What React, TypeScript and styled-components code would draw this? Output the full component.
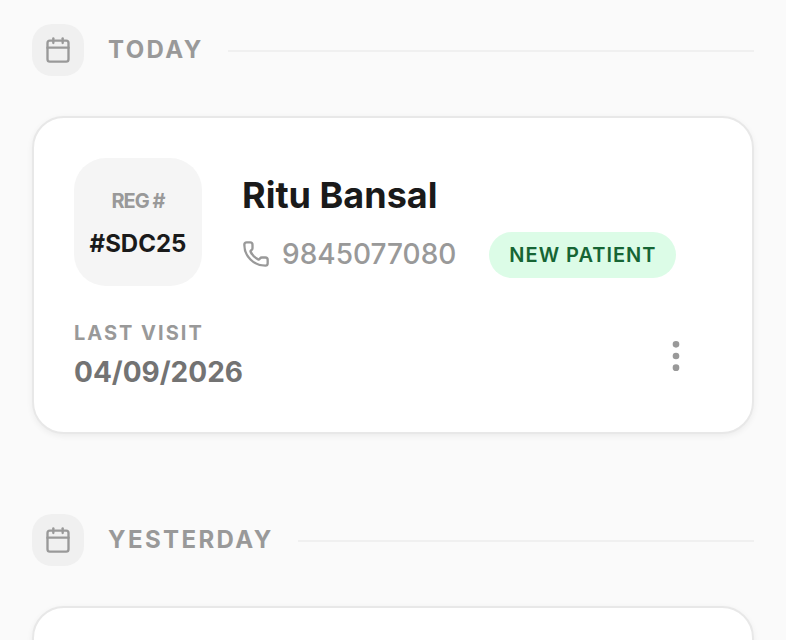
import React from "react";
import styled, { createGlobalStyle } from "styled-components";
import { Calendar, EllipsisVertical, Phone } from "lucide-react";

const GlobalStyle = createGlobalStyle`
  *, *::before, *::after { box-sizing: border-box; }
  html { background: #fafafa; }
  body { margin: 0; font-family: Inter, "Liberation Sans", sans-serif; color: #1a1a1a; }
  h2, h3, p, dl, dt, dd { margin: 0; }
  svg { display: block; flex: none; }
`;

const Page = styled.main`
  display: flex;
  flex-direction: column;
  gap: 80px;
  height: 100vh;
  padding: 24px 32px 0;
  overflow: hidden;
`;

const DaySection = styled.section`
  display: flex;
  flex: none;
  flex-direction: column;
  gap: 40px;
`;

const DayHeader = styled.header`
  display: flex;
  align-items: center;
  gap: 24px;
`;

const DayIcon = styled.span`
  display: flex;
  padding: 12px;
  border-radius: 20px;
  background: #f0f0f0;
  color: #999999;
`;

const DayTitle = styled.h2`
  font-size: 24px;
  line-height: 36px;
  font-weight: 700;
  letter-spacing: 0.1em;
  text-transform: uppercase;
  color: #999999;
`;

const Rule = styled.span`
  flex: 1;
  height: 4px;
  border-bottom: 2px solid #f0f0f0;
`;

const Card = styled.article`
  display: flex;
  flex-direction: column;
  gap: 34px;
  padding: 40px;
  border: 2px solid #e8e8e8;
  border-radius: 32px;
  background: #ffffff;
  box-shadow: 0 2px 6px rgba(0, 0, 0, 0.06);
`;

const Summary = styled.div`
  display: flex;
  align-items: center;
  gap: 40px;
`;

const RegBadge = styled.div`
  display: flex;
  flex: none;
  flex-direction: column;
  align-items: center;
  justify-content: center;
  gap: 12px;
  width: 128px;
  height: 128px;
  border-radius: 32px;
  background: #f5f5f5;
`;

const RegLabel = styled.span`
  font-size: 20px;
  line-height: 32px;
  font-weight: 700;
  letter-spacing: -0.05em;
  color: #999999;
`;

const RegNumber = styled.span`
  font-size: 24px;
  line-height: 30px;
  font-weight: 700;
`;

const Identity = styled.div`
  display: flex;
  flex-direction: column;
  gap: 8px;
`;

const PatientName = styled.h3`
  font-size: 36px;
  line-height: 58px;
  font-weight: 700;
`;

const Contact = styled.div`
  display: flex;
  align-items: flex-start;
  gap: 33px;
`;

const PhoneLink = styled.a`
  display: flex;
  align-items: center;
  gap: 12px;
  font-size: 28px;
  line-height: 44px;
  font-weight: 500;
  color: #999999;
  text-decoration: none;
`;

const StatusPill = styled.span`
  padding: 8px 20px;
  border-radius: 24px;
  background: #dcfce7;
  color: #166534;
  font-size: 20px;
  line-height: 30px;
  font-weight: 600;
  letter-spacing: 0.05em;
  text-transform: uppercase;
`;

const CardFooter = styled.div`
  display: flex;
  align-items: center;
  justify-content: space-between;
`;

const LastVisit = styled.dl`
  display: flex;
  flex-direction: column;
  gap: 6px;
`;

const VisitLabel = styled.dt`
  font-size: 20px;
  line-height: 26px;
  font-weight: 700;
  letter-spacing: 0.1em;
  text-transform: uppercase;
  color: #999999;
`;

const VisitDate = styled.dd`
  font-size: 28px;
  line-height: 40px;
  font-weight: 700;
  color: #737373;
`;

const MenuButton = styled.button`
  display: flex;
  padding: 16px;
  border: 0;
  border-radius: 16px;
  background: none;
  color: #999999;
  cursor: pointer;
`;

type Visit = { name: string; reg: string; phone: string; status: string; lastVisit: string };
type Day = { title: string; visits: Visit[] };

const days: Day[] = [
  {
    title: "Today",
    visits: [
      {
        name: "Ritu Bansal",
        reg: "#SDC25",
        phone: "9845077080",
        status: "New Patient",
        lastVisit: "04/09/2026",
      },
    ],
  },
  { title: "Yesterday", visits: [] },
];

function VisitCard({ visit }: { visit: Visit }) {
  return (
    <Card>
      <Summary>
        <RegBadge>
          <RegLabel>REG #</RegLabel>
          <RegNumber>{visit.reg}</RegNumber>
        </RegBadge>
        <Identity>
          <PatientName>{visit.name}</PatientName>
          <Contact>
            <PhoneLink href={`tel:${visit.phone}`}>
              <Phone size={28} strokeWidth={2} aria-hidden />
              {visit.phone}
            </PhoneLink>
            <StatusPill>{visit.status}</StatusPill>
          </Contact>
        </Identity>
      </Summary>
      <CardFooter>
        <LastVisit>
          <VisitLabel>Last Visit</VisitLabel>
          <VisitDate>{visit.lastVisit}</VisitDate>
        </LastVisit>
        <MenuButton type="button" aria-label="More actions">
          <EllipsisVertical size={40} aria-hidden />
        </MenuButton>
      </CardFooter>
    </Card>
  );
}

export default function App() {
  return (
    <>
      <GlobalStyle />
      <Page>
        {days.map((day) => (
          <DaySection key={day.title}>
            <DayHeader>
              <DayIcon>
                <Calendar size={28} strokeWidth={2} aria-hidden />
              </DayIcon>
              <DayTitle>{day.title}</DayTitle>
              <Rule />
            </DayHeader>
            {day.visits.map((visit) => (
              <VisitCard key={visit.reg} visit={visit} />
            ))}
            {day.visits.length === 0 && <Card />}
          </DaySection>
        ))}
      </Page>
    </>
  );
}
